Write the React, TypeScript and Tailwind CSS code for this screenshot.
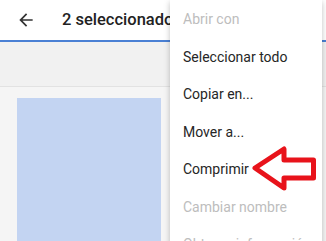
import React from "react";

const items: { label: string; disabled?: boolean }[] = [
  { label: "Abrir con", disabled: true },
  { label: "Seleccionar todo" },
  { label: "Copiar en..." },
  { label: "Mover a..." },
  { label: "Comprimir" },
  { label: "Cambiar nombre", disabled: true },
  { label: "Obtener información", disabled: true },
];

export default function App() {
  return (
    <div
      className="relative w-[326px] h-[241px] overflow-hidden bg-[#f5f5f5]"
      style={{ fontFamily: "Roboto, 'Noto Sans', sans-serif" }}
    >
      {/* header */}
      <div className="h-[40px] bg-white flex items-center pl-[16px] gap-[26px]">
        <svg width="20" height="20" viewBox="0 0 24 24" className="text-[#333]">
          <path
            fill="currentColor"
            d="M20 11H7.83l5.59-5.59L12 4l-8 8 8 8 1.41-1.41L7.83 13H20v-2z"
          />
        </svg>
        <span className="text-[16.5px] font-medium text-[#222] whitespace-nowrap">
          2 seleccionados
        </span>
      </div>
      <div className="h-[2px] bg-[#4a80d4]" />
      <div className="h-[45px] bg-[#f1f1f1] border-b border-[#e2e2e2]" />
      <div className="pt-[11px] pl-[17px]">
        <div className="w-[144px] h-[160px] bg-[#c3d4f2]" />
      </div>

      {/* overflow menu */}
      <div className="absolute left-[170px] top-0 w-[152px] h-[260px] bg-white shadow-[0_2px_6px_rgba(0,0,0,0.25)] pt-[1px]">
        {items.map((it) => (
          <div
            key={it.label}
            className={`h-[37.5px] flex items-center pl-[13px] text-[14px] whitespace-nowrap ${
              it.disabled ? "text-[#bdbdbd]" : "text-[#262626]"
            }`}
          >
            {it.label}
          </div>
        ))}
      </div>

      {/* red annotation arrow */}
      <svg
        className="absolute left-0 top-0"
        width="326"
        height="241"
        viewBox="0 0 326 241"
      >
        <polygon
          points="255,168 284,149 284,160 313.5,160 313.5,178 284,178 284,188"
          fill="none"
          stroke="#e8131b"
          strokeWidth="5"
          strokeLinejoin="round"
        />
      </svg>
    </div>
  );
}
